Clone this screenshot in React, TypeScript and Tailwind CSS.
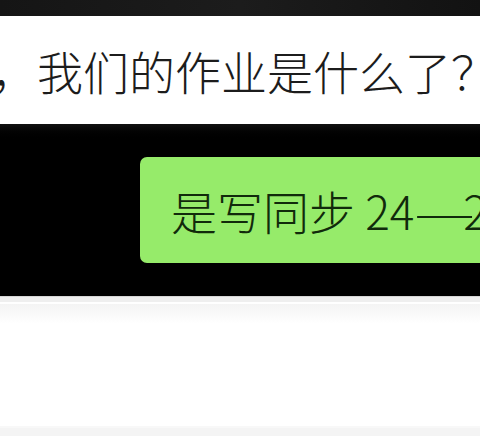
export default function App() {
  const cjk = { fontFamily: '"Noto Sans CJK SC", "Noto Sans", sans-serif' };
  return (
    <div className="w-[480px] h-[436px] overflow-hidden bg-black flex flex-col" style={cjk}>
      {/* top strip */}
      <div className="h-[16px] shrink-0 bg-gradient-to-r from-[#151515] via-[#1c1c1c] to-[#121212]" />

      {/* received message (cut off on the left) */}
      <div className="h-[108px] shrink-0 bg-white flex items-center overflow-hidden">
        <div className="ml-[-9px] whitespace-nowrap text-[46px] leading-none font-light text-[#1c1c1c]">
          ，我们的作业是什么了？
        </div>
      </div>

      {/* chat background */}
      <div className="h-[172px] shrink-0 bg-gradient-to-b from-[#111111] to-black to-[10%] flex flex-col">
        <div className="h-[33px] shrink-0" />
        <div className="flex justify-end">
          <div className="h-[106px] w-[340px] shrink-0 rounded-l-[7px] bg-[#96eb6a] flex items-center pl-[31px] overflow-hidden">
            <span className="whitespace-nowrap text-[46px] leading-none font-light text-[#112a0b]">
              是写同步 24<span className="inline-block origin-left scale-x-[1.5] mr-[8px]">—</span>25
            </span>
          </div>
        </div>
      </div>

      {/* input area */}
      <div className="flex-1 flex flex-col border-t border-[#d6d6d6] bg-white">
        <div className="h-[5px] shrink-0 bg-[#efefef]" />
        <div className="h-[2px] shrink-0 bg-white" />
        <div className="h-[20px] shrink-0 bg-gradient-to-b from-[#f4f4f4] to-white" />
        <div className="flex-1 bg-white" />
        <div className="h-[2px] shrink-0 bg-[#f8f8f8]" />
        <div className="h-[8px] shrink-0 bg-[#f4f4f4]" />
      </div>
    </div>
  );
}
